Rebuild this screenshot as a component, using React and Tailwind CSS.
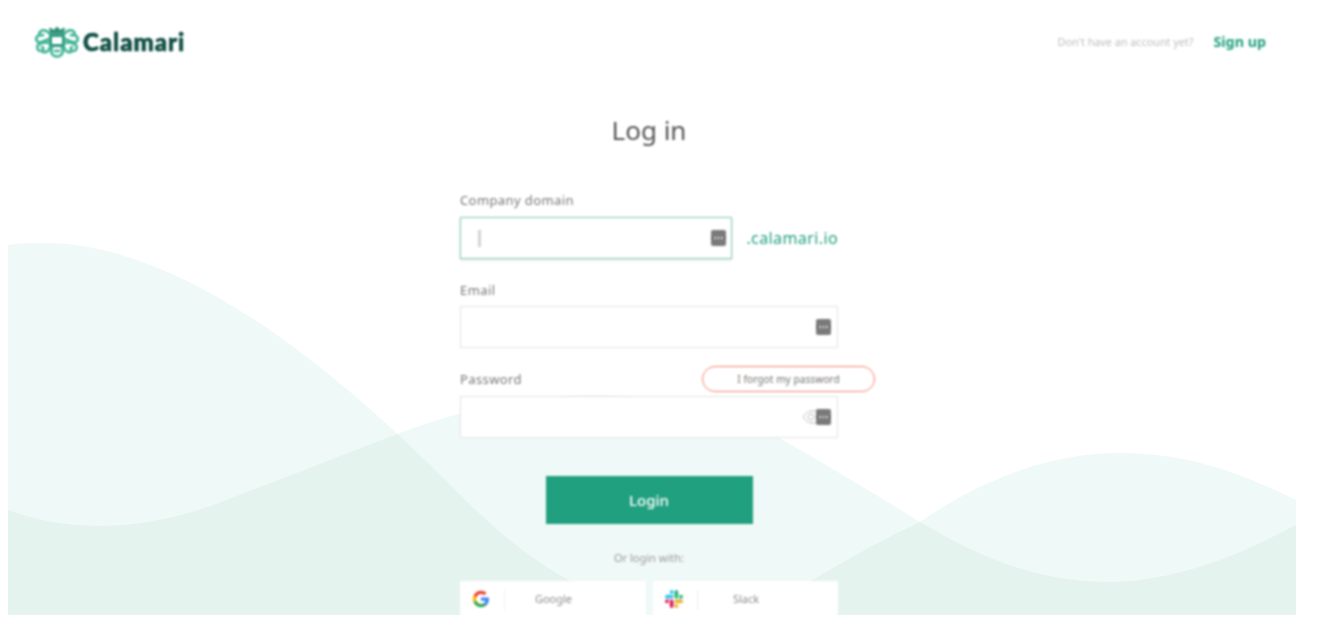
import React from 'react';

const WAVE_ONE = 'M8 245 C20 243 32 243 45 243 C180 243 335 368 452 487 C490 525 530 560 572 582 C610 610 650 632 690 632 C730 632 770 605 816 578 C850 558 885 538 920 522 C980 480 1050 453 1120 453 C1190 453 1245 475 1296 500 L1296 615 L8 615 Z';
const WAVE_TWO = 'M8 510 C38 521 70 526 100 526 C150 526 200 512 244 493 C300 472 350 452 400 433 C460 410 530 395 590 395 C660 395 720 405 783 440 C830 467 875 494 920 522 C980 558 1040 582 1107 582 C1170 582 1235 558 1296 525 L1296 615 L8 615 Z';

function Waves() {
    return (
        <svg className="absolute inset-0 w-[1288px] h-[615px]" viewBox="8 0 1288 615">
            <defs>
                <clipPath id="waveClip">
                    <path d={WAVE_ONE} />
                </clipPath>
            </defs>
            <path d={WAVE_ONE} fill="#eff9f7" />
            <path d={WAVE_TWO} fill="#eff9f7" />
            <path d={WAVE_TWO} fill="#e4f3ed" clipPath="url(#waveClip)" />
        </svg>
    );
}

function Logo() {
    return (
        <svg width="44" height="32" viewBox="0 0 44 32" fill="none" stroke="#3fb394" strokeWidth="2.6" strokeLinecap="round" strokeLinejoin="round">
            <rect x="15.5" y="9.5" width="13" height="10" strokeWidth="3" stroke="#2f9a80" />
            <path d="M15 8 C12 4 7 3 5 6 C3 8 6 10 8 9 M5 9 C1 10 0 14 3 16 C6 17 10 15 14 13" />
            <path d="M14 17 C10 16 6 17 3 19 C1 22 3 25 6 25 C9 25 9 22 7 21 M8 26 C11 27 14 25 15 21" />
            <path d="M29 8 C32 4 37 3 39 6 C41 8 38 10 36 9 M39 9 C43 10 44 14 41 16 C38 17 34 15 30 13" />
            <path d="M30 17 C34 16 38 17 41 19 C43 22 41 25 38 25 C35 25 35 22 37 21 M36 26 C33 27 30 25 29 21" />
            <path d="M16 7 L15 2.5 L19 5 L22 1.5 L25 5 L29 2.5 L28 7 Z" strokeWidth="1.6" fill="#2f8f78" stroke="#2f8f78" />
            <path d="M17 22 C15 26 17 30.5 22 30.5 C27 30.5 29 26 27 22" />
            <path d="M20 25 H24" />
        </svg>
    );
}

function FillIcon() {
    return (
        <svg width="15" height="16" viewBox="0 0 15 16">
            <rect width="15" height="16" rx="2" fill="#7a7a7a" />
            <rect x="0" y="7" width="15" height="2" fill="#666666" />
            <circle cx="4" cy="8" r="1.1" fill="#fff" />
            <circle cx="7.5" cy="8" r="1.1" fill="#fff" />
            <circle cx="11" cy="8" r="1.1" fill="#fff" />
        </svg>
    );
}

function EyeIcon() {
    return (
        <svg width="18" height="14" viewBox="0 0 18 14" fill="none" stroke="#bdbdbd" strokeWidth="1">
            <path d="M1 7 C4 2.5 7 1 10 1 H17 V13 H10 C7 13 4 11.5 1 7 Z" />
            <circle cx="9" cy="7" r="3" />
        </svg>
    );
}

function GoogleIcon() {
    return (
        <svg width="18" height="18" viewBox="0 0 24 24">
            <path fill="#4285F4" d="M22.56 12.25c0-.78-.07-1.53-.2-2.25H12v4.26h5.92c-.26 1.37-1.04 2.53-2.21 3.31v2.77h3.57c2.08-1.92 3.28-4.74 3.28-8.09z" />
            <path fill="#34A853" d="M12 23c2.97 0 5.46-.98 7.28-2.66l-3.57-2.77c-.98.66-2.23 1.06-3.71 1.06-2.86 0-5.29-1.93-6.16-4.53H2.18v2.84C3.99 20.53 7.7 23 12 23z" />
            <path fill="#FBBC05" d="M5.84 14.09c-.22-.66-.35-1.36-.35-2.09s.13-1.43.35-2.09V7.07H2.18C1.43 8.55 1 10.22 1 12s.43 3.45 1.18 4.93l3.66-2.84z" />
            <path fill="#EA4335" d="M12 5.38c1.62 0 3.06.56 4.21 1.64l3.15-3.15C17.45 2.09 14.97 1 12 1 7.7 1 3.99 3.47 2.18 7.07l3.66 2.84c.87-2.6 3.3-4.53 6.16-4.53z" />
        </svg>
    );
}

function SlackIcon() {
    return (
        <svg width="18" height="18" viewBox="0 0 24 24">
            <path fill="#E01E5A" d="M5.042 15.165a2.528 2.528 0 0 1-2.52 2.523A2.528 2.528 0 0 1 0 15.165a2.527 2.527 0 0 1 2.522-2.52h2.52v2.52zM6.313 15.165a2.527 2.527 0 0 1 2.521-2.52 2.527 2.527 0 0 1 2.521 2.52v6.313A2.528 2.528 0 0 1 8.834 24a2.528 2.528 0 0 1-2.521-2.522v-6.313z" />
            <path fill="#36C5F0" d="M8.834 5.042a2.528 2.528 0 0 1-2.521-2.52A2.528 2.528 0 0 1 8.834 0a2.528 2.528 0 0 1 2.521 2.522v2.52H8.834zM8.834 6.313a2.528 2.528 0 0 1 2.521 2.521 2.528 2.528 0 0 1-2.521 2.521H2.522A2.528 2.528 0 0 1 0 8.834a2.528 2.528 0 0 1 2.522-2.521h6.312z" />
            <path fill="#2EB67D" d="M18.956 8.834a2.528 2.528 0 0 1 2.522-2.521A2.528 2.528 0 0 1 24 8.834a2.528 2.528 0 0 1-2.522 2.521h-2.522V8.834zM17.688 8.834a2.528 2.528 0 0 1-2.523 2.521 2.527 2.527 0 0 1-2.52-2.521V2.522A2.527 2.527 0 0 1 15.165 0a2.528 2.528 0 0 1 2.523 2.522v6.312z" />
            <path fill="#ECB22E" d="M15.165 18.956a2.528 2.528 0 0 1 2.523 2.522A2.528 2.528 0 0 1 15.165 24a2.527 2.527 0 0 1-2.52-2.522v-2.522h2.52zM15.165 17.688a2.527 2.527 0 0 1-2.52-2.523 2.526 2.526 0 0 1 2.52-2.52h6.313A2.527 2.527 0 0 1 24 15.165a2.528 2.528 0 0 1-2.522 2.523h-6.313z" />
        </svg>
    );
}

function SocialButton({ icon, label, className }) {
    return (
        <div className={`h-[50px] bg-white flex items-start pt-[9px] pl-[12px] ${className}`}>
            {icon}
            <div className="w-px h-[20px] bg-[#eeeeee] ml-[14px]" />
            <span className="flex-1 text-center text-[11px] leading-[18px] text-[#8a8a8a] pr-[44px]">{label}</span>
        </div>
    );
}

export default function App() {
    return (
        <div className="min-h-[634px] bg-white pl-2 font-['Noto_Sans',sans-serif]">
            <div className="relative w-[1288px] h-[615px] overflow-hidden bg-white">
                <Waves />

                <div className="relative blur-[0.8px]">
                    {/* Header */}
                    <div className="flex items-center justify-between h-[84px] pl-[27px] pr-[30px]">
                        <div className="flex items-center gap-[4px]">
                            <Logo />
                            <span className="font-['Lato',sans-serif] font-black text-[24px] leading-none text-[#0f4f44] tracking-[1px] [-webkit-text-stroke:0.7px_#0f4f44]">Calamari</span>
                        </div>
                        <div className="flex items-center gap-[20px]">
                            <span className="text-[10.8px] text-[#bdbdbd]">Don't have an account yet?</span>
                            <span className="text-[14.3px] font-bold text-[#1f9f7e]">Sign up</span>
                        </div>
                    </div>

                    {/* Form */}
                    <div className="w-[378px] ml-[452px] relative">
                        <h1 className="text-center text-[26px] leading-[32px] mt-[30px] text-[#555555]">Log in</h1>

                        <div className="mt-[46px] h-[17px] text-[13px] leading-[17px] tracking-[0.4px] text-[#777777]">Company domain</div>
                        <div className="flex items-center mt-[8px]">
                            <div className="w-[273px] h-[42px] bg-white border-[1.5px] border-[#7fcab6] shadow-sm flex items-center justify-between pl-[17px] pr-[5px]">
                                <div className="w-[3px] h-[17px] bg-[#d4d4d4]" />
                                <FillIcon />
                            </div>
                            <span className="ml-[14px] text-[16px] text-[#21a07f] tracking-[0.4px]">.calamari.io</span>
                        </div>

                        <div className="mt-[23px] h-[17px] text-[13px] leading-[17px] tracking-[0.4px] text-[#777777]">Email</div>
                        <div className="mt-[7px] h-[42px] bg-white border border-[#e4e4e4] flex items-center justify-end pr-[6px]">
                            <FillIcon />
                        </div>

                        <div className="mt-[23px] h-[17px] text-[13px] leading-[17px] tracking-[0.4px] text-[#777777]">Password</div>
                        <div className="mt-[8px] h-[42px] bg-white border border-[#e4e4e4] flex items-center justify-end pr-[6px]">
                            <div className="-mr-[4px]"><EyeIcon /></div>
                            <FillIcon />
                        </div>
                        <div className="absolute left-[242px] top-[252px] w-[173px] h-[26px] bg-white border-[1.5px] border-[#f9806f] rounded-[13px] text-[10px] leading-[24px] tracking-[0.1px] text-center text-[#777777]">I forgot my password</div>

                        <button className="block mx-auto mt-[38px] w-[207px] h-[48px] bg-[#21a07f] text-white text-[15px] font-medium">Login</button>

                        <div className="mt-[26px] text-center text-[11px] leading-[16px] text-[#999999]">Or login with:</div>
                        <div className="flex gap-[7px] mt-[15px]">
                            <SocialButton icon={<GoogleIcon />} label="Google" className="w-[186px]" />
                            <SocialButton icon={<SlackIcon />} label="Slack" className="w-[185px]" />
                        </div>
                    </div>
                </div>
            </div>
        </div>
    );
}
